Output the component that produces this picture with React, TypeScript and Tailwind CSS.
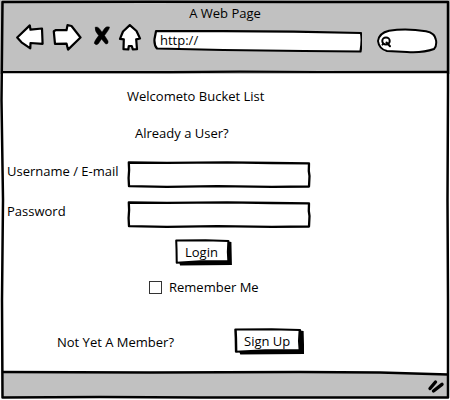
import React from "react";

type Sketch = { box: string; d: string; fill?: string; width?: number; shadow?: string };

// Hand-drawn outline that stretches with the element it surrounds.
function SketchOutline({ box, d, fill = "white", width = 2, shadow }: Sketch) {
  return (
    <svg
      aria-hidden="true"
      className="pointer-events-none absolute inset-0 h-full w-full"
      viewBox={box}
      preserveAspectRatio="none"
    >
      {shadow && <path d={shadow} fill="black" />}
      <path d={d} fill={fill} stroke="black" strokeWidth={width} strokeLinejoin="round" strokeLinecap="round" />
    </svg>
  );
}

function Toolbar() {
  return (
    <div className="flex items-start pt-px pl-4 pr-3">
      <button type="button" aria-label="Back" className="shrink-0">
        <svg className="block h-7 w-7" viewBox="16 24 28 28" fill="white" stroke="black" strokeWidth="2.2" strokeLinejoin="round">
          <path d="M17.2 37.5 L29.8 25.4 L30.5 29.7 L42 28.5 L42.6 43.8 L30.5 43 L30.3 48.3 L21.5 42.3 Z" />
        </svg>
      </button>
      <button type="button" aria-label="Forward" className="ml-2 shrink-0">
        <svg className="block h-7 w-8" viewBox="52 24 32 28" fill="white" stroke="black" strokeWidth="2.2" strokeLinejoin="round">
          <path d="M53.8 31.3 L56 30 L66.5 30.2 L67.5 25.2 L71.5 26 L80.5 37.5 L68 49.6 L66.5 43.6 L55 43.8 Z" />
        </svg>
      </button>
      <button type="button" aria-label="Stop" className="ml-2 shrink-0">
        <svg className="block h-7 w-5" viewBox="92 24 20 28">
          <path d="M95.2 27.2 Q98 26 100 29.5 L102 32.2 L104.5 28.5 Q106 26 109.5 27 Q109.5 29 107 32 L104.5 35.5 L108 41 Q108.5 44.5 105.5 43.8 L101.5 39 L98.5 43.5 Q96 46 94.2 43.2 Q94.5 41 98.7 35.6 Q94.5 31 95.2 27.2 Z" stroke="black" strokeWidth="0.5" />
        </svg>
      </button>
      <button type="button" aria-label="Home" className="ml-1 shrink-0">
        <svg className="block h-7 w-7" viewBox="116 24 28 28" fill="white" stroke="black" strokeWidth="2.2" strokeLinejoin="round">
          <path d="M129.8 25.1 L136.5 31 L140 38.5 L136.2 39.3 L137 49.2 L132.8 49.4 L131.8 46 L128.8 46 L128.3 49.5 L123.5 49.2 L123.8 39.3 L120 38.8 L123 31.5 Z" />
        </svg>
      </button>
      <div className="relative mt-[6px] ml-[9px] h-[23px] min-w-0 flex-1">
        <SketchOutline
          box="0 0 208 23"
          width={2.2}
          d="M3 1.2 L70 1.2 L140 1.7 L207 3 Q208.5 10 206.5 21.5 L150 21 L70 20 L4 18.5 Q1 15 1.5 9 Z"
        />
        <input
          aria-label="Address"
          defaultValue="http://"
          className="relative block h-5 w-full bg-transparent px-[7px] outline-none"
        />
      </div>
      <div className="relative mt-1 ml-[14px] h-[26px] w-[62px] shrink-0">
        <SketchOutline
          box="0 0 62 26"
          d="M2 13 Q3 5 13 2.7 Q30 0 50 3.2 Q59 5 60 12 Q61 18 58 21 Q47 25 31 24 L11 23 Q3 21 2 13 Z"
        />
        <svg
          aria-hidden="true"
          className="absolute top-2 left-[5px] h-4 w-4"
          viewBox="0 0 16 16"
          fill="none"
          stroke="black"
          strokeWidth="2"
          strokeLinecap="round"
        >
          <ellipse cx="5" cy="5" rx="3.7" ry="3.4" />
          <path d="M5.5 6.5 L9 10.3 M2.3 7.8 L1.5 8.6" />
        </svg>
        <input aria-label="Search" className="relative block h-full w-full bg-transparent pr-2 pl-5 outline-none" />
      </div>
    </div>
  );
}

function Field({ id, label, type }: { id: string; label: string; type: string }) {
  return (
    <div className="flex h-7 items-start">
      <label htmlFor={id} className="w-[120px] shrink-0">
        {label}
      </label>
      <div className="relative h-7 w-[184px]">
        <SketchOutline
          box="0 0 184 28"
          width={2.3}
          d="M1.8 1.5 L40 1.8 L100 1.3 L145 2 L182 2.4 L181.8 10 L182.5 15 L182 25.5 L145 25.8 L90 25.2 L40 25.8 L2 25.2 L1.6 17 L2.1 9 Z"
        />
        <input id={id} type={type} className="relative block h-full w-full bg-transparent px-2 outline-none" />
      </div>
    </div>
  );
}

function SketchButton({ type, children }: { type: "submit" | "button"; children: React.ReactNode }) {
  return (
    <button type={type} className="relative flex h-[27px] items-start pt-[3px] pr-[14px] pl-[10px]">
      <SketchOutline
        box="0 0 56 27"
        shadow="M4 23 L52 22 L52.5 2.5 L55.5 3 L56 26 L5 26.5 Z"
        d="M1.2 1.5 L30 1.2 L52.5 2 L52 13 L52.5 22.3 L25 22.2 L1.7 23.8 L1.5 10 Z"
      />
      <span className="relative">{children}</span>
    </button>
  );
}

export default function App() {
  return (
    <div className="relative flex min-h-screen flex-col bg-white font-['Open_Sans','Noto_Sans',sans-serif] text-[13px] leading-5 text-black">
      <header className="relative h-[74px] bg-[#c1c1c1] pt-[3px]">
        <h1 className="text-center">A Web Page</h1>
        <Toolbar />
        <svg aria-hidden="true" className="absolute bottom-0 left-0 h-1 w-full" viewBox="0 0 450 4" preserveAspectRatio="none">
          <path d="M2 2 L170 2.2 L240 1.6 L320 2 L448 1.8" fill="none" stroke="black" strokeWidth="2.2" />
        </svg>
      </header>

      <main className="flex-1 pt-3 pl-[7px]">
        <h2 className="pl-[120px]">Welcometo Bucket List</h2>
        <p className="mt-[17px] pl-32">Already a User?</p>
        <form className="mt-[18px]" onSubmit={(e) => e.preventDefault()}>
          <div className="flex flex-col gap-3">
            <Field id="username" label="Username / E-mail" type="text" />
            <Field id="password" label="Password" type="password" />
          </div>
          <div className="mt-[10px] flex pl-[168px]">
            <SketchButton type="submit">Login</SketchButton>
          </div>
          <div className="mt-[11px] flex items-center gap-[7px] pl-[142px]">
            <input
              id="remember"
              type="checkbox"
              className="h-[13px] w-[13px] appearance-none border border-[#333333] bg-white checked:bg-black"
            />
            <label htmlFor="remember">Remember Me</label>
          </div>
        </form>
        <div className="mt-[31px] flex items-start pl-[50px]">
          <p className="w-[177px] pt-1">Not Yet A Member?</p>
          <SketchButton type="button">Sign Up</SketchButton>
        </div>
      </main>

      <footer className="relative h-[30px]">
        <svg aria-hidden="true" className="block h-full w-full" viewBox="0 0 450 30" preserveAspectRatio="none">
          <path d="M2 2 L150 2.5 L300 2 L380 2.6 L448 4.6 L448 28 L2 28 Z" fill="#c1c1c1" />
          <path d="M2 2 L150 2.5 L300 2 L380 2.6 L448 4.6" fill="none" stroke="black" strokeWidth="2.5" />
        </svg>
        <svg aria-hidden="true" className="absolute right-[5px] bottom-[5px] h-4 w-[18px]" viewBox="0 0 18 16">
          <path d="M3 9.5 L8.5 3 M6.5 12 L15 5.3" stroke="black" strokeWidth="3.4" strokeLinecap="round" />
        </svg>
      </footer>

      <SketchOutline
        box="0 0 450 400"
        fill="none"
        width={2.5}
        d="M2.5 2 L150 1.7 L300 2 L448 2 L448 90 L447.5 200 L448 300 L448 397.5 L200 397.6 L100 397 L2.5 397.5 L2 300 L3 200 L1.5 100 Z"
      />
    </div>
  );
}
